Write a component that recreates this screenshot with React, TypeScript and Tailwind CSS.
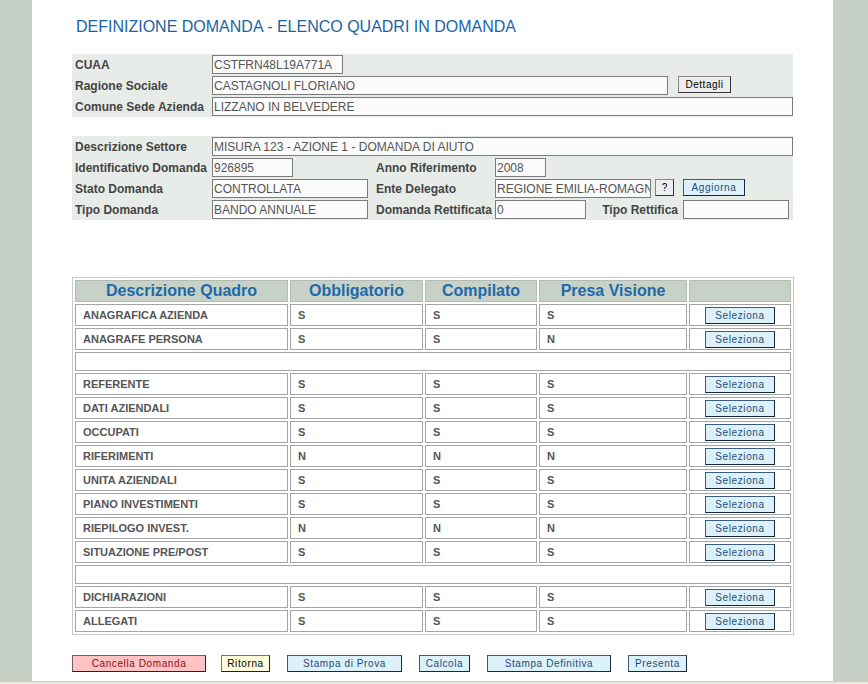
const rows: [string, string, string, string][] = [
  ["ANAGRAFICA AZIENDA", "S", "S", "S"],
  ["ANAGRAFE PERSONA", "S", "S", "N"],
  ["", "", "", ""],
  ["REFERENTE", "S", "S", "S"],
  ["DATI AZIENDALI", "S", "S", "S"],
  ["OCCUPATI", "S", "S", "S"],
  ["RIFERIMENTI", "N", "N", "N"],
  ["UNITA AZIENDALI", "S", "S", "S"],
  ["PIANO INVESTIMENTI", "S", "S", "S"],
  ["RIEPILOGO INVEST.", "N", "N", "N"],
  ["SITUAZIONE PRE/POST", "S", "S", "S"],
  ["", "", "", ""],
  ["DICHIARAZIONI", "S", "S", "S"],
  ["ALLEGATI", "S", "S", "S"],
]

function Field({ value, className }: { value: string; className: string }) {
  return (
    <div
      className={`h-[19px] shrink-0 overflow-hidden whitespace-nowrap border border-[#7b7b7b] bg-[#fbfbfb] pl-[1px] pt-[1px] text-[12px] leading-[16px] text-[#555] ${className}`}
    >
      {value}
    </div>
  )
}

function Label({ text, className = "w-[140px] pl-[3px]" }: { text: string; className?: string }) {
  return (
    <div className={`shrink-0 pt-[1px] text-[12px] font-bold leading-[18px] text-[#444] ${className}`}>
      {text}
    </div>
  )
}

function BlueButton({ text, className }: { text: string; className: string }) {
  return (
    <button
      className={`h-[17px] shrink-0 border border-[#3b5c7a] border-b-[#14293d] border-r-[#14293d] bg-[#ddf1fb] text-[10px] leading-[15px] tracking-[0.6px] text-[#1d4c73] ${className}`}
    >
      {text}
    </button>
  )
}

export default function App() {
  return (
    <div className="flex h-[684px] w-[868px] flex-col overflow-hidden bg-white font-['Liberation_Sans',Arial,sans-serif]">
      <div className="flex h-[681px]">
        <div className="w-[32px] shrink-0 bg-[#c6d0c6]" />

        <div className="w-[801px] shrink-0 pl-[40px]">
          {/* Title */}
          <h1 className="ml-[4px] mt-[17px] text-[16px] leading-[20px] text-[#1b64a3]">
            DEFINIZIONE DOMANDA - ELENCO QUADRI IN DOMANDA
          </h1>

          {/* Azienda */}
          <div className="mt-[17px] flex w-[721px] flex-col gap-[2px] bg-[#e8ece8] py-[1px]">
            <div className="flex items-start">
              <Label text="CUAA" />
              <Field value="CSTFRN48L19A771A" className="w-[131px]" />
            </div>
            <div className="flex items-start">
              <Label text="Ragione Sociale" />
              <Field value="CASTAGNOLI FLORIANO" className="w-[456px]" />
              <button className="ml-[10px] h-[17px] w-[53px] border border-[#888] border-b-[#333] border-r-[#333] bg-[#eeeeee] text-[10px] leading-[15px] tracking-[0.5px] text-black">
                Dettagli
              </button>
            </div>
            <div className="flex items-start">
              <Label text="Comune Sede Azienda" />
              <Field value="LIZZANO IN BELVEDERE" className="w-[581px]" />
            </div>
          </div>

          {/* Domanda */}
          <div className="mt-[19px] flex w-[721px] flex-col gap-[2px] bg-[#e8ece8] py-[1px]">
            <div className="flex items-start">
              <Label text="Descrizione Settore" />
              <Field value="MISURA 123 - AZIONE 1 - DOMANDA DI AIUTO" className="w-[581px]" />
            </div>
            <div className="flex items-start">
              <Label text="Identificativo Domanda" />
              <div className="w-[164px] shrink-0">
                <Field value="926895" className="w-[81px]" />
              </div>
              <Label text="Anno Riferimento" className="w-[119px]" />
              <Field value="2008" className="w-[51px]" />
            </div>
            <div className="flex items-start">
              <Label text="Stato Domanda" />
              <div className="w-[164px] shrink-0">
                <Field value="CONTROLLATA" className="w-[156px]" />
              </div>
              <Label text="Ente Delegato" className="w-[119px]" />
              <Field value="REGIONE EMILIA-ROMAGNA" className="w-[156px]" />
              <button className="ml-[4px] h-[17px] w-[19px] shrink-0 border border-[#888] border-b-[#333] border-r-[#333] bg-[#eeeeee] text-[10px] leading-[15px] text-black">
                ?
              </button>
              <BlueButton text="Aggiorna" className="ml-[9px] w-[62px]" />
            </div>
            <div className="flex items-start">
              <Label text="Tipo Domanda" />
              <div className="w-[164px] shrink-0">
                <Field value="BANDO ANNUALE" className="w-[156px]" />
              </div>
              <Label text="Domanda Rettificata" className="w-[119px]" />
              <Field value="0" className="w-[91px]" />
              <Label text="Tipo Rettifica" className="w-[97px] pr-[5px] text-right" />
              <Field value="" className="w-[106px]" />
            </div>
          </div>

          {/* Quadri */}
          <table className="mt-[57px] w-[721px] table-fixed border-separate border-spacing-[2px] border border-[#c9c9c9] leading-none">
            <colgroup>
              <col className="w-[213px]" />
              <col className="w-[133px]" />
              <col className="w-[112px]" />
              <col className="w-[148px]" />
              <col className="w-[102px]" />
            </colgroup>
            <thead>
              <tr>
                {["Descrizione Quadro", "Obbligatorio", "Compilato", "Presa Visione", ""].map((h, i) => (
                  <th key={i} className="border border-[#b3bcb3] bg-[#c7d1c8] p-0">
                    <div className="flex h-[20px] items-center justify-center text-[16px] font-bold text-[#1d6aa8]">
                      {h}
                    </div>
                  </th>
                ))}
              </tr>
            </thead>
            <tbody>
              {rows.map((r, i) =>
                r[0] === "" ? (
                  <tr key={i}>
                    <td colSpan={5} className="border border-[#a5a5a5] p-0">
                      <div className="h-[17px]" />
                    </td>
                  </tr>
                ) : (
                  <tr key={i}>
                    {r.map((c, j) => (
                      <td key={j} className="border border-[#a5a5a5] bg-white p-0">
                        <div className="flex h-[20px] items-center pl-[7px] text-[11px] font-bold text-[#555]">
                          {c}
                        </div>
                      </td>
                    ))}
                    <td className="border border-[#a5a5a5] bg-white p-0">
                      <div className="flex h-[20px] items-center justify-center">
                        <BlueButton text="Seleziona" className="w-[70px]" />
                      </div>
                    </td>
                  </tr>
                )
              )}
            </tbody>
          </table>

          {/* Azioni */}
          <div className="mt-[20px] flex items-start">
            <button className="h-[17px] w-[134px] border border-[#7a5a5a] border-b-[#3a1a1a] border-r-[#3a1a1a] bg-[#ffc3c3] text-[10px] leading-[15px] tracking-[0.6px] text-[#8a0f0f]">
              Cancella Domanda
            </button>
            <button className="ml-[15px] h-[17px] w-[49px] border border-[#777] border-b-[#222] border-r-[#222] bg-[#ffffdc] text-[10px] leading-[15px] tracking-[0.6px] text-black">
              Ritorna
            </button>
            <BlueButton text="Stampa di Prova" className="ml-[17px] w-[115px]" />
            <BlueButton text="Calcola" className="ml-[17px] w-[51px]" />
            <BlueButton text="Stampa Definitiva" className="ml-[17px] w-[124px]" />
            <BlueButton text="Presenta" className="ml-[17px] w-[59px]" />
          </div>
        </div>

        <div className="w-[35px] shrink-0 bg-[#c6d0c6]" />
      </div>
      <div className="h-[3px] border-t border-[#cfcbc3] bg-[#ebe8e2]" />
    </div>
  )
}
